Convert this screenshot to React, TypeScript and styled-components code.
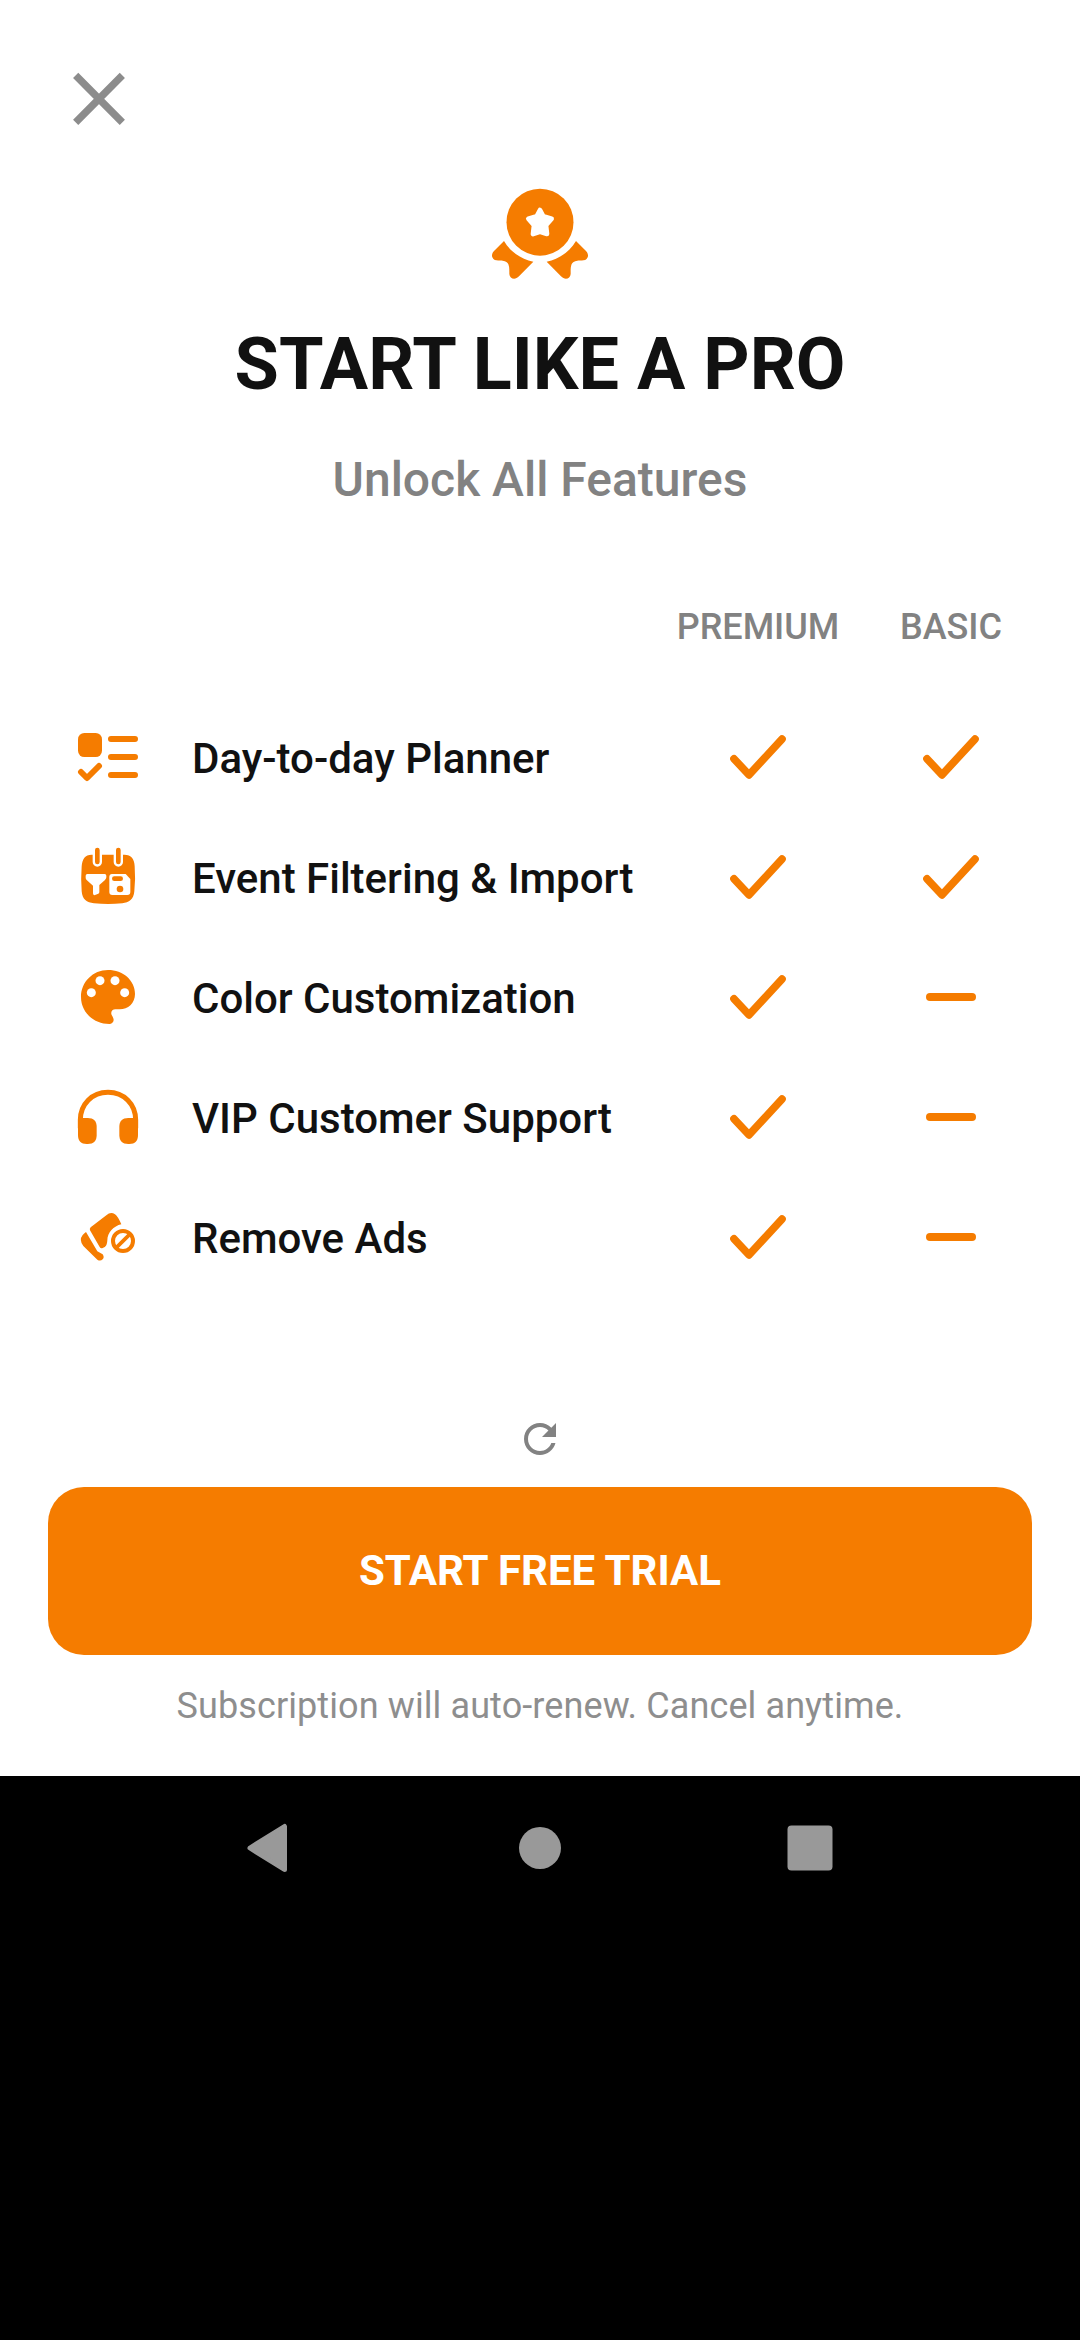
import React from "react";
import styled, { createGlobalStyle } from "styled-components";

const ORANGE = "#f57c00";
const GREY = "#828282";

const GlobalStyle = createGlobalStyle`
  html, body { margin: 0; padding: 0; background: #000; }
  * { box-sizing: border-box; }
`;

const Device = styled.div`
  width: 1080px;
  height: 2340px;
  background: #000;
  display: flex;
  flex-direction: column;
  overflow: hidden;
  font-family: Roboto, "Noto Sans", sans-serif;
`;

const Screen = styled.main`
  height: 1776px;
  flex: none;
  background: #fff;
  display: flex;
  flex-direction: column;
`;

const TopBar = styled.header`
  height: 170px;
  padding: 50px 0 0 50px;
`;

const CloseButton = styled.button`
  display: block;
  width: 100px;
  height: 100px;
  padding: 0;
  border: 0;
  background: none;
`;

const Icon = styled.svg`
  display: block;
  flex: none;
`;

const Hero = styled.section`
  height: 414px;
  display: flex;
  flex-direction: column;
  align-items: center;
`;

const Title = styled.h1`
  margin: 33px 0 0;
  font-size: 72px;
  line-height: 84px;
  font-weight: 700;
  color: #111;
  white-space: nowrap;
`;

const Subtitle = styled.h2`
  margin: 45px 0 0;
  font-size: 48px;
  line-height: 56px;
  font-weight: 500;
  color: ${GREY};
  white-space: nowrap;
`;

const Table = styled.section`
  height: 713px;
  padding: 0 32.5px 0 72px;
`;

const Row = styled.div<{ $header?: boolean }>`
  display: grid;
  grid-template-columns: 120px 1fr 193px 193px;
  align-items: center;
  height: ${(p) => (p.$header ? "84px" : "120px")};
  margin-bottom: ${(p) => (p.$header ? "29px" : "0")};
`;

const ColumnLabel = styled.span`
  padding-top: 2px;
  font-size: 36px;
  line-height: 42px;
  font-weight: 500;
  color: ${GREY};
  text-align: center;
`;

const Feature = styled.span`
  padding-top: 3px;
  font-size: 42px;
  line-height: 50px;
  font-weight: 500;
  color: #111;
  white-space: nowrap;
`;

const Cell = styled.div`
  display: flex;
  justify-content: center;
`;

const Footer = styled.footer`
  padding: 118px 48px 0;
  display: flex;
  flex-direction: column;
  align-items: center;
`;

const TrialButton = styled.button`
  width: 984px;
  height: 168px;
  margin-top: 24px;
  padding: 0;
  border: 0;
  border-radius: 36px;
  background: ${ORANGE};
  color: #fff;
  font-family: inherit;
  font-size: 42px;
  font-weight: 700;
  line-height: 50px;
`;

const Note = styled.p`
  margin: 30px 0 0;
  font-size: 36px;
  line-height: 42px;
  letter-spacing: 0.1px;
  color: #8e8e8e;
  white-space: nowrap;
`;

const NavBar = styled.nav`
  height: 144px;
  display: flex;
  justify-content: center;
  align-items: center;
  gap: 198px;
`;

const NavButton = styled.span`
  width: 72px;
  height: 72px;
`;

const Medal = () => (
  <Icon width="140" height="120" viewBox="0 0 420 360" fill={ORANGE}>
    <circle cx="210" cy="156.500" r="100.500" />
    <path
      d="M210 120L220 139L245 146L228 166L231 192L210 185L189 192L192 166L175 146L200 139Z"
      fill="#fff"
      stroke="#fff"
      strokeWidth="14"
      strokeLinejoin="round"
    />
    <path d="M102 213C121 245 152 267 190 275L147 319C135 332 119 326 118 312C118 288 119 276 98 272C87 270 73 276 67 262C64 254 68 246 75 240Z" />
    <path d="M318 213C299 245 268 267 230 275L273 319C285 332 301 326 302 312C302 288 301 276 322 272C333 270 347 276 353 262C356 254 352 246 345 240Z" />
  </Icon>
);

const Planner = () => (
  <Icon width="72" height="72" viewBox="36 33 216 216" fill={ORANGE}>
    <rect x="54" y="69" width="72" height="72" rx="19" />
    <g fill="none" stroke={ORANGE} strokeWidth="18" strokeLinecap="round" strokeLinejoin="round">
      <path d="M153 87H225M153 141H225M153 195H225" />
      <path d="M63 186L81 204L117 168" />
    </g>
  </Icon>
);

const Events = () => (
  <Icon width="72" height="72" viewBox="36 393 216 216" fill={ORANGE}>
    <path d="M95 434H193C214 434 223 447 224 469Q227 508 223 544C221 568 207 578 187 580Q144 584 102 580C80 578 67 568 65 544Q62 508 65 469C67 447 75 434 95 434Z" />
    <path d="M112 420V456M175 420V456" fill="none" stroke="#fff" strokeWidth="28" strokeLinecap="round" />
    <path d="M112 420V456M175 420V456" fill="none" stroke={ORANGE} strokeWidth="14" strokeLinecap="round" />
    <path fill="#fff" d="M82 492H134Q139 492 139 497V502Q139 506 135 510L118 525V546Q118 549 115 551L105 555Q99 557 99 550V527L80 510Q77 507 77 503V497Q77 492 82 492Z" />
    <path fill="#fff" d="M156 492H197L211 507V546Q211 555 202 555H157Q148 555 148 546V501Q148 492 156 492Z" />
    <rect x="156" y="499" width="33" height="14" rx="7" />
    <circle cx="180" cy="537" r="10" />
  </Icon>
);

const Palette = () => (
  <Icon width="72" height="72" viewBox="36 33 216 216" fill={ORANGE}>
    <path d="M144 60C189 60 225 91 225 132C225 160 204 178 179 178H166C157 178 151 186 155 195C158 201 161 204 161 210C161 217 155 222 148 222C100 222 63 186 63 141S99 60 144 60Z" />
    <g fill="#fff">
      <circle cx="94" cy="128" r="13.500" />
      <circle cx="120" cy="92" r="13.500" />
      <circle cx="165" cy="92" r="13.500" />
      <circle cx="194" cy="128" r="13.500" />
    </g>
  </Icon>
);

const Headphones = () => (
  <Icon width="72" height="72" viewBox="36 393 216 216" fill={ORANGE}>
    <path d="M61 535V510C61 463 96 427 144 427S227 463 227 510V535" fill="none" stroke={ORANGE} strokeWidth="15" />
    <path d="M54 504H83C101 504 110 513 110 530V555C110 573 101 582 83 582H80C63 582 54 573 54 555Z" />
    <path d="M234 504H205C187 504 178 513 178 530V555C178 573 187 582 205 582H208C225 582 234 573 234 555Z" />
  </Icon>
);

const RemoveAds = () => (
  <Icon width="72" height="72" viewBox="36 33 216 216" fill={ORANGE}>
    <path d="M92 112L139 76Q152 64 165 73Q173 78 184 103C161 108 142 128 142 151C141 165 138 171 128 174Q122 176 119 171L90 121Q88 116 92 112Z" />
    <path d="M78 126L112 184L128 193Q134 202 128 208Q121 215 112 209L70 168Q56 150 68 135Q72 130 78 126Z" />
    <circle cx="189" cy="153" r="30" fill="none" stroke={ORANGE} strokeWidth="12" />
    <path d="M169 173L209 133" stroke={ORANGE} strokeWidth="11" />
  </Icon>
);

const Check = () => (
  <Icon width="60" height="60" viewBox="0 0 180 180" fill="none">
    <path d="M18 95.500L63 143.500L162 36.500" stroke={ORANGE} strokeWidth="23" strokeLinecap="round" strokeLinejoin="round" />
  </Icon>
);

const Dash = () => (
  <Icon width="60" height="60" viewBox="0 0 180 180" fill="none">
    <path d="M27 90H153" stroke={ORANGE} strokeWidth="24" strokeLinecap="round" />
  </Icon>
);

const features = [
  { name: "Day-to-day Planner", icon: Planner, basic: true },
  { name: "Event Filtering & Import", icon: Events, basic: true },
  { name: "Color Customization", icon: Palette, basic: false },
  { name: "VIP Customer Support", icon: Headphones, basic: false },
  { name: "Remove Ads", icon: RemoveAds, basic: false },
];

export default function App() {
  return (
    <Device>
      <GlobalStyle />
      <Screen>
        <TopBar>
          <CloseButton aria-label="Close">
            <Icon width="100" height="100" viewBox="0 0 300 300">
              <path d="M77 76L217 217M217 76L77 217" stroke="#8c8c8c" strokeWidth="22" />
            </Icon>
          </CloseButton>
        </TopBar>
        <Hero>
          <Medal />
          <Title>START LIKE A PRO</Title>
          <Subtitle>Unlock All Features</Subtitle>
        </Hero>
        <Table>
          <Row $header>
            <span />
            <span />
            <ColumnLabel>PREMIUM</ColumnLabel>
            <ColumnLabel>BASIC</ColumnLabel>
          </Row>
          {features.map(({ name, icon: Glyph, basic }) => (
            <Row key={name}>
              <Glyph />
              <Feature>{name}</Feature>
              <Cell>
                <Check />
              </Cell>
              <Cell>{basic ? <Check /> : <Dash />}</Cell>
            </Row>
          ))}
        </Table>
        <Footer>
          <Icon width="48" height="48" viewBox="0 0 24 24" fill={GREY}>
            <path d="M17.65 6.35C16.2 4.9 14.21 4 12 4c-4.42 0-7.99 3.58-7.99 8s3.57 8 7.99 8c3.73 0 6.84-2.55 7.73-6h-2.08c-.82 2.33-3.04 4-5.65 4-3.31 0-6-2.69-6-6s2.69-6 6-6c1.66 0 3.14.69 4.22 1.78L13 11h7V4l-2.35 2.35z" />
          </Icon>
          <TrialButton>START FREE TRIAL</TrialButton>
          <Note>Subscription will auto-renew. Cancel anytime.</Note>
        </Footer>
      </Screen>
      <NavBar>
        <NavButton>
          <Icon width="72" height="72" viewBox="0 0 72 72" fill="#999">
            <path d="M51.500 14.500V57.500L17 36Z" transform="translate(-1 0)" stroke="#999" strokeWidth="5" strokeLinejoin="round" />
          </Icon>
        </NavButton>
        <NavButton>
          <Icon width="72" height="72" viewBox="0 0 72 72" fill="#999">
            <circle cx="36" cy="36" r="21" />
          </Icon>
        </NavButton>
        <NavButton>
          <Icon width="72" height="72" viewBox="0 0 72 72" fill="#999">
            <rect x="13.500" y="13.500" width="45" height="45" rx="4" />
          </Icon>
        </NavButton>
      </NavBar>
    </Device>
  );
}
